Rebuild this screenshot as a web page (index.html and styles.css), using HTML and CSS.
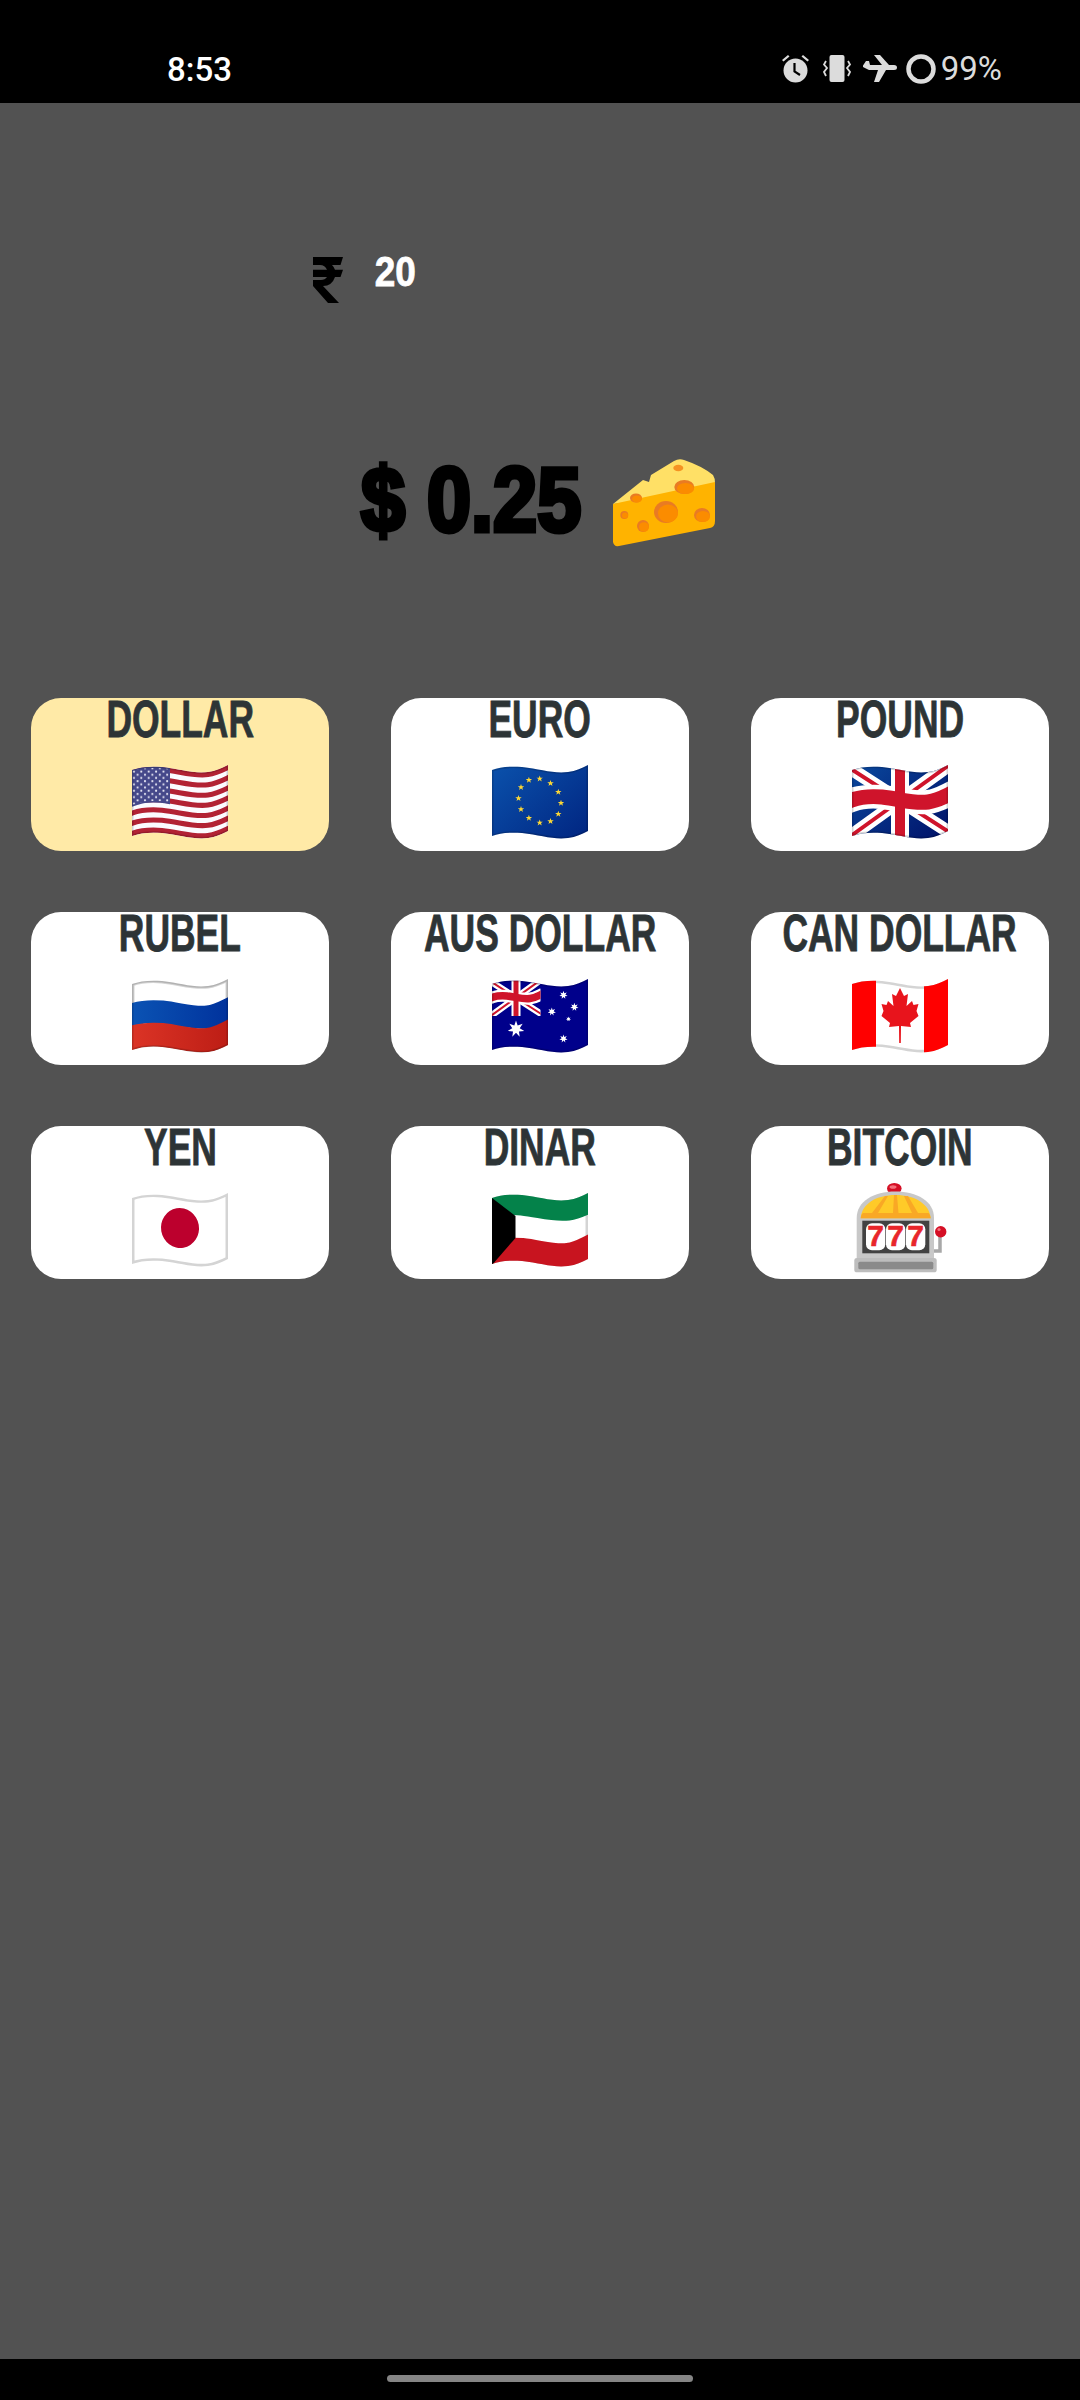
FILE: index.html
```html
<!DOCTYPE html>
<html lang="en">
<head>
    <meta charset="UTF-8">
    <meta name="viewport" content="width=device-width, initial-scale=1.0">
    <title>Currency Cheese</title>
    <link rel="stylesheet" href="styles.css">
</head>
<body>
    <!-- shared flag parts -->
    <svg class="defs" width="0" height="0">
        <defs>
            <clipPath id="flag-clip">
                <path d="M0 5C8 2 18 1 30 2C48 4 62 9 76 7C84 6 90 3 96 0V66C90 69 84 72 76 73C62 75 48 70 30 68C18 67 8 68 0 71Z"/>
            </clipPath>
            <clipPath id="us-canton"><rect x="0" y="-5" width="38" height="50"/></clipPath>
            <clipPath id="aus-canton"><rect x="0" y="-5" width="48.5" height="42"/></clipPath>
            <path id="flag-edge" fill="none" d="M0 5C8 2 18 1 30 2C48 4 62 9 76 7C84 6 90 3 96 0V66C90 69 84 72 76 73C62 75 48 70 30 68C18 67 8 68 0 71Z"/>
            <path id="wave" fill="none" d="M-6 7L0 5C8 2 18 1 30 2C48 4 62 9 76 7C84 6 90 3 96 0L102 -3"/>
            <polygon id="star5" points="0,-3.3 .8,-1 3.2,-1 1.3,.4 2,2.7 0,1.3 -2,2.7 -1.3,.4 -3.2,-1 -.8,-1"/>
            <polygon id="star7" points="0,-10 1.95,-4.05 7.82,-6.23 4.39,-1.01 9.75,2.23 3.52,2.81 4.34,9.01 0,4.5 -4.34,9.01 -3.52,2.81 -9.75,2.23 -4.39,-1.01 -7.82,-6.23 -1.95,-4.05"/>
            <pattern id="us-stars" width="7.4" height="6.4" patternUnits="userSpaceOnUse">
                <circle cx="1.9" cy="1.6" r="1.05" fill="#e8e8f4"/>
                <circle cx="5.6" cy="4.8" r="1.05" fill="#e8e8f4"/>
            </pattern>
            <linearGradient id="eu-blue" x1="0" y1="0" x2="1" y2="1">
                <stop offset="0" stop-color="#0b53ad"/>
                <stop offset="1" stop-color="#00237f"/>
            </linearGradient>
            <linearGradient id="uk-blue" x1="0" y1="0" x2="1" y2="1">
                <stop offset="0" stop-color="#0a4a9f"/>
                <stop offset="1" stop-color="#000f66"/>
            </linearGradient>
            <linearGradient id="ru-blue" x1="0" y1="0" x2="1" y2="0">
                <stop offset="0" stop-color="#0b55b5"/>
                <stop offset="1" stop-color="#00309b"/>
            </linearGradient>
            <linearGradient id="ru-red" x1="0" y1="0" x2="1" y2="0">
                <stop offset="0" stop-color="#dd3527"/>
                <stop offset="1" stop-color="#bb1c14"/>
            </linearGradient>
            <g id="jack">
                <path d="M-4 2L100 69M100 -2L-4 73" stroke="#fff" stroke-width="13"/>
                <path d="M-4 2L100 69M100 -2L-4 73" stroke="#cf142b" stroke-width="4"/>
                <rect x="39" y="-5" width="18" height="85" fill="#fff"/>
                <use href="#wave" y="30" stroke="#fff" stroke-width="24"/>
                <rect x="43" y="-5" width="10" height="85" fill="#cf142b"/>
                <use href="#wave" y="30" stroke="#cf142b" stroke-width="15"/>
            </g>
        </defs>
    </svg>

    <header class="status-bar">
        <span class="clock">8:53</span>
        <div class="status-icons">
            <svg class="icon-alarm" viewBox="0 0 27 29" fill="#dcdcdc">
                <path d="M0 6L6 1L7.500 2.500L1.500 7.500ZM27 6L21 1L19.500 2.500L25.500 7.500Z"/>
                <circle cx="13.500" cy="16.500" r="12"/>
                <path d="M12.500 9V17.500L18 21" fill="none" stroke="#000" stroke-width="2.200"/>
            </svg>
            <svg class="icon-vibrate" viewBox="0 0 28 27">
                <rect x="6.500" y="0" width="15" height="27" rx="2" fill="#dcdcdc"/>
                <path d="M3 6L1 9.500L4 13L1 17L3 21M25 6L27 9.500L24 13L27 17L25 21" fill="none" stroke="#dcdcdc" stroke-width="1.800"/>
            </svg>
            <svg class="icon-plane" viewBox="0 0 34 27" fill="#dcdcdc">
                <path d="M11 0H17L26 10H31Q34 10 34 12.500Q34 15 31 15H23L16 27H11L15 15H6L0 12V10.500L3 6H6L7 10H19Z"/>
            </svg>
            <svg class="icon-ring" viewBox="0 0 30 30">
                <circle cx="15" cy="15" r="12.500" fill="none" stroke="#dcdcdc" stroke-width="4.500"/>
            </svg>
            <span class="battery">99%</span>
        </div>
    </header>

    <main class="content">
        <div class="wallet">
            <svg class="icon-rupee" viewBox="0 0 31 46" fill="#000">
                <path d="M1 0H31L28.500 8H20Q22 10 23 12.700H31L28.500 20H23Q20 29 11 29L27 46H16L1 29V23H9Q13 23 15 20H1V12.700H15Q13 8 8 8H1Z"/>
            </svg>
            <span class="wallet-amount"><span class="squeeze-wide">20</span></span>
        </div>

        <div class="price">
            <span class="price-value">$ 0.25</span>
            <svg class="icon-cheese" viewBox="0 0 104 88">
                <path d="M1 45L31 21L37 23L39 16L62 2Q67 -1 72 1Q90 7 101 16Q103 19 103 24L60 40Z" fill="#ffe066"/>
                <path d="M1 45L103 23V62Q103 68 98 69L7 87Q2 88 1 83Z" fill="#ffb300"/>
                <ellipse cx="66.300" cy="9" rx="5" ry="3.200" fill="#f59322"/>
                <ellipse cx="72.300" cy="28" rx="10" ry="7" fill="#e97b23"/>
                <ellipse cx="73.500" cy="29.500" rx="8.500" ry="5.500" fill="#fb8c00"/>
                <ellipse cx="24" cy="39" rx="6" ry="4.500" fill="#e97b23"/>
                <ellipse cx="25" cy="40" rx="5" ry="3.500" fill="#fb8c00"/>
                <ellipse cx="54" cy="53" rx="12" ry="11" fill="#e97b23"/>
                <ellipse cx="56" cy="54.500" rx="10" ry="9" fill="#fb8c00"/>
                <ellipse cx="90" cy="56" rx="8" ry="7" fill="#e97b23"/>
                <ellipse cx="91" cy="57.500" rx="7" ry="5.500" fill="#fb8c00"/>
                <ellipse cx="31" cy="67" rx="6" ry="6" fill="#e97b23"/>
                <ellipse cx="32" cy="68" rx="5" ry="4.800" fill="#fb8c00"/>
                <ellipse cx="12.300" cy="56" rx="4" ry="4" fill="#e97b23"/>
                <ellipse cx="13" cy="56.500" rx="3" ry="3" fill="#fb8c00"/>
            </svg>
        </div>

        <section class="currencies">
            <div class="card card-active">
                <div class="card-title"><span class="squeeze">DOLLAR</span></div>
                <svg class="emoji" viewBox="0 -12 96 96">
                    <g clip-path="url(#flag-clip)">
                        <rect x="0" y="-5" width="96" height="85" fill="#fbfbff"/>
                        <use href="#wave" y="2.540" stroke="#b22234" stroke-width="5.080"/>
                        <use href="#wave" y="12.700" stroke="#b22234" stroke-width="5.080"/>
                        <use href="#wave" y="22.900" stroke="#b22234" stroke-width="5.080"/>
                        <use href="#wave" y="33" stroke="#b22234" stroke-width="5.080"/>
                        <use href="#wave" y="43.200" stroke="#b22234" stroke-width="5.080"/>
                        <use href="#wave" y="53.300" stroke="#b22234" stroke-width="5.080"/>
                        <use href="#wave" y="63.500" stroke="#b22234" stroke-width="5.080"/>
                        <g clip-path="url(#us-canton)">
                            <use href="#wave" y="17.800" stroke="#45488a" stroke-width="36"/>
                            <use href="#wave" y="17.800" stroke="url(#us-stars)" stroke-width="33"/>
                        </g>
                        <use href="#flag-edge" class="edge"/>
                    </g>
                </svg>
            </div>

            <div class="card">
                <div class="card-title"><span class="squeeze">EURO</span></div>
                <svg class="emoji" viewBox="0 -12 96 96">
                    <g clip-path="url(#flag-clip)">
                        <rect x="0" y="-5" width="96" height="85" fill="url(#eu-blue)"/>
                        <g fill="#fdd835">
                            <use href="#star5" x="36.900" y="15"/>
                            <use href="#star5" x="47.700" y="13.700"/>
                            <use href="#star5" x="58.500" y="18.300"/>
                            <use href="#star5" x="66.300" y="27"/>
                            <use href="#star5" x="69" y="38"/>
                            <use href="#star5" x="66.300" y="49"/>
                            <use href="#star5" x="58.500" y="56.300"/>
                            <use href="#star5" x="47.700" y="57.700"/>
                            <use href="#star5" x="36.900" y="53"/>
                            <use href="#star5" x="29" y="44.300"/>
                            <use href="#star5" x="26.500" y="33.300"/>
                            <use href="#star5" x="29" y="22.300"/>
                        </g>
                        <use href="#flag-edge" class="edge"/>
                    </g>
                </svg>
            </div>

            <div class="card">
                <div class="card-title"><span class="squeeze">POUND</span></div>
                <svg class="emoji" viewBox="0 -12 96 96">
                    <g clip-path="url(#flag-clip)">
                        <rect x="0" y="-5" width="96" height="85" fill="url(#uk-blue)"/>
                        <use href="#jack"/>
                        <use href="#flag-edge" class="edge"/>
                    </g>
                </svg>
            </div>

            <div class="card">
                <div class="card-title"><span class="squeeze">RUBEL</span></div>
                <svg class="emoji" viewBox="0 -12 96 96">
                    <g clip-path="url(#flag-clip)">
                        <rect x="0" y="-5" width="96" height="85" fill="#fff"/>
                        <use href="#flag-edge" class="edge-wide"/>
                        <use href="#wave" y="31" stroke="url(#ru-blue)" stroke-width="23"/>
                        <use href="#wave" y="54" stroke="url(#ru-red)" stroke-width="24"/>
                        <use href="#flag-edge" class="edge"/>
                    </g>
                </svg>
            </div>

            <div class="card">
                <div class="card-title"><span class="squeeze">AUS DOLLAR</span></div>
                <svg class="emoji" viewBox="0 -12 96 96">
                    <g clip-path="url(#flag-clip)">
                        <rect x="0" y="-5" width="96" height="85" fill="#00008b"/>
                        <g clip-path="url(#aus-canton)">
                            <use href="#jack" transform="translate(0 1) scale(.5)"/>
                        </g>
                        <g fill="#fff">
                            <use href="#star7" transform="translate(24 50) scale(.85)"/>
                            <use href="#star7" transform="translate(71.500 16) scale(.42)"/>
                            <use href="#star7" transform="translate(82.400 28) scale(.42)"/>
                            <use href="#star7" transform="translate(59.800 32.700) scale(.42)"/>
                            <use href="#star7" transform="translate(76.500 40) scale(.26)"/>
                            <use href="#star7" transform="translate(71.500 59.700) scale(.42)"/>
                        </g>
                        <use href="#flag-edge" class="edge"/>
                    </g>
                </svg>
            </div>

            <div class="card">
                <div class="card-title"><span class="squeeze">CAN DOLLAR</span></div>
                <svg class="emoji" viewBox="0 -12 96 96">
                    <g clip-path="url(#flag-clip)">
                        <rect x="0" y="-5" width="96" height="85" fill="#fff"/>
                        <use href="#flag-edge" class="edge-wide"/>
                        <rect x="0" y="-5" width="24" height="85" fill="#f00"/>
                        <rect x="72" y="-5" width="24" height="85" fill="#f00"/>
                        <polygon fill="#e8141c" transform="translate(48 0)" points="0,9 4,17 8,15 6.500,27 12,22 13.500,26 18.500,25 16.500,32 18.500,37 10,44 11,48 1,47 .8,64 -.8,64 -1,47 -11,48 -10,44 -18.500,37 -16.500,32 -18.500,25 -13.500,26 -12,22 -6.500,27 -8,15 -4,17"/>
                    </g>
                </svg>
            </div>

            <div class="card">
                <div class="card-title"><span class="squeeze">YEN</span></div>
                <svg class="emoji" viewBox="0 -12 96 96">
                    <g clip-path="url(#flag-clip)">
                        <rect x="0" y="-5" width="96" height="85" fill="#fff"/>
                        <ellipse cx="48" cy="35" rx="19" ry="20" fill="#bc002d" transform="rotate(-10 48 35)"/>
                        <use href="#flag-edge" class="edge-wide"/>
                    </g>
                </svg>
            </div>

            <div class="card">
                <div class="card-title"><span class="squeeze">DINAR</span></div>
                <svg class="emoji" viewBox="0 -12 96 96">
                    <g clip-path="url(#flag-clip)">
                        <rect x="0" y="-5" width="96" height="85" fill="#fff"/>
                        <use href="#flag-edge" class="edge-wide"/>
                        <use href="#wave" y="9" stroke="#04824a" stroke-width="23"/>
                        <use href="#wave" y="55" stroke="#c8141f" stroke-width="24"/>
                        <polygon fill="#000" points="0,5 23.500,23 23.500,45 0,72"/>
                    </g>
                </svg>
            </div>

            <div class="card">
                <div class="card-title"><span class="squeeze">BITCOIN</span></div>
                <svg class="emoji" viewBox="0 0 96 96">
                    <ellipse cx="42.300" cy="7.500" rx="7.300" ry="5.500" fill="#d50f25"/>
                    <ellipse cx="41" cy="6" rx="3.500" ry="1.800" fill="#f4717c"/>
                    <path d="M82 70H88V52" fill="none" stroke="#a8a8a8" stroke-width="3.500"/>
                    <circle cx="88.700" cy="50.700" r="5.700" fill="#d50f25"/>
                    <circle cx="87" cy="48.500" r="1.600" fill="#f4717c"/>
                    <path d="M4.700 78V37C4.700 20 22 10.500 43.300 10.500C65 10.500 82 20 82 37V78Z" fill="#c8c8c8"/>
                    <path d="M8.700 37.300C9.500 23 24 14 43.500 14C63 14 77.500 23 78.700 37.300Z" fill="#ffca28"/>
                    <path d="M8.700 37.300C9 34 10 33 11 32H76.500C77.500 33 78.300 34.500 78.700 37.300ZM20 32L33 15L36 15L26 32ZM41 32L42 14H45L46.500 32ZM60 32L52 15L56 15L66 32Z" fill="#f9a825"/>
                    <rect x="10.300" y="39.700" width="67" height="32.600" fill="#424242"/>
                    <rect x="14" y="42.300" width="19.300" height="27" rx="6" fill="#fff"/>
                    <rect x="34" y="42.300" width="19.300" height="27" rx="6" fill="#fff"/>
                    <rect x="54" y="42.300" width="19.300" height="27" rx="6" fill="#fff"/>
                    <g class="reel-sevens">
                        <text x="23.600" y="65">7</text>
                        <text x="43.600" y="65">7</text>
                        <text x="63.600" y="65">7</text>
                    </g>
                    <path d="M2.300 79Q2.300 77 5 77H82Q84.700 77 84.700 79V89Q84.700 91.300 82 91.300H5Q2.300 91.300 2.300 89Z" fill="#bdbdbd"/>
                    <rect x="6.300" y="80.700" width="75" height="7.600" rx="1.500" fill="#8a8a8a"/>
                </svg>
            </div>
        </section>
    </main>

    <footer class="nav-bar">
        <div class="nav-handle"></div>
    </footer>
</body>
</html>
```

FILE: styles.css
```css
* {
    box-sizing: border-box;
}
html, body {
    margin: 0;
    height: 100%;
}
body {
    display: flex;
    flex-direction: column;
    width: 1080px;
    height: 2400px;
    background-color: #525252;
    font-family: "Liberation Sans", Arial, sans-serif;
    overflow: hidden;
}
.defs {
    display: block;
}

/* status bar */
.status-bar {
    flex: none;
    height: 103px;
    background-color: #000;
    display: flex;
    justify-content: space-between;
    align-items: flex-start;
    padding: 50px 78px 0 167px;
    font-family: Roboto, sans-serif;
}
.clock {
    color: #fff;
    font-size: 33px;
    font-weight: 500;
    line-height: 39px;
}
.status-icons {
    display: flex;
    align-items: center;
    gap: 12px;
    height: 37px;
    color: #dcdcdc;
}
.icon-alarm {
    width: 27px;
    height: 29px;
    margin-right: 2px;
}
.icon-vibrate {
    width: 28px;
    height: 27px;
}
.icon-plane {
    width: 34px;
    height: 27px;
}
.icon-ring {
    width: 30px;
    height: 30px;
    margin-left: -3px;
}
.battery {
    margin-left: -7px;
    font-size: 33px;
    line-height: 37px;
}

/* wallet and price */
.content {
    flex: 1;
}
.wallet {
    display: flex;
    align-items: flex-start;
    gap: 29px;
    padding: 154px 0 0 312px;
}
.icon-rupee {
    width: 31px;
    height: 46px;
}
.wallet-amount {
    color: #fff;
    font-size: 42px;
    font-weight: 700;
    line-height: 42px;
    margin-top: -6px;
    -webkit-text-stroke: .8px #fff;
}
.squeeze-wide {
    display: inline-block;
    transform: scaleX(.88);
}
.price {
    display: flex;
    justify-content: center;
    align-items: flex-start;
    gap: 16px;
    margin-top: 152px;
    padding-right: 18px;
}
.price-value {
    color: #000;
    font-size: 90px;
    font-weight: 700;
    line-height: 96px;
    -webkit-text-stroke: 5px #000;
    white-space: nowrap;
    transform: translateY(-3px) scaleX(.88);
}
.icon-cheese {
    width: 104px;
    height: 88px;
    margin-top: 4px;
}

/* currency grid */
.currencies {
    display: grid;
    grid-template-columns: repeat(3, 298px);
    grid-auto-rows: 153px;
    column-gap: 62px;
    row-gap: 61px;
    margin-top: 147px;
    padding-left: 31px;
}
.card {
    display: flex;
    flex-direction: column;
    align-items: center;
    background-color: #fff;
    border-radius: 30px;
    color: #2d3436;
}
.card-active {
    background-color: #ffeaa7;
}
.card-title {
    height: 55px;
    font-size: 51px;
    font-weight: 700;
    line-height: 44px;
    white-space: nowrap;
    -webkit-text-stroke: .8px #2d3436;
}
.squeeze {
    display: inline-block;
    transform: scaleX(.695);
}
.emoji {
    flex: none;
    width: 96px;
    height: 96px;
}
.edge {
    stroke: rgba(0, 0, 0, .16);
    stroke-width: 3;
}
.edge-wide {
    stroke: #d4d4d4;
    stroke-width: 5;
}
.reel-sevens {
    font-size: 30px;
    font-weight: 700;
    fill: #e8262b;
    stroke: #e8262b;
    stroke-width: .6;
    text-anchor: middle;
}

/* bottom bar */
.nav-bar {
    flex: none;
    height: 41px;
    background-color: #000;
    padding-top: 16px;
}
.nav-handle {
    width: 306px;
    height: 7px;
    margin: 0 auto;
    border-radius: 4px;
    background-color: #858585;
}
```
